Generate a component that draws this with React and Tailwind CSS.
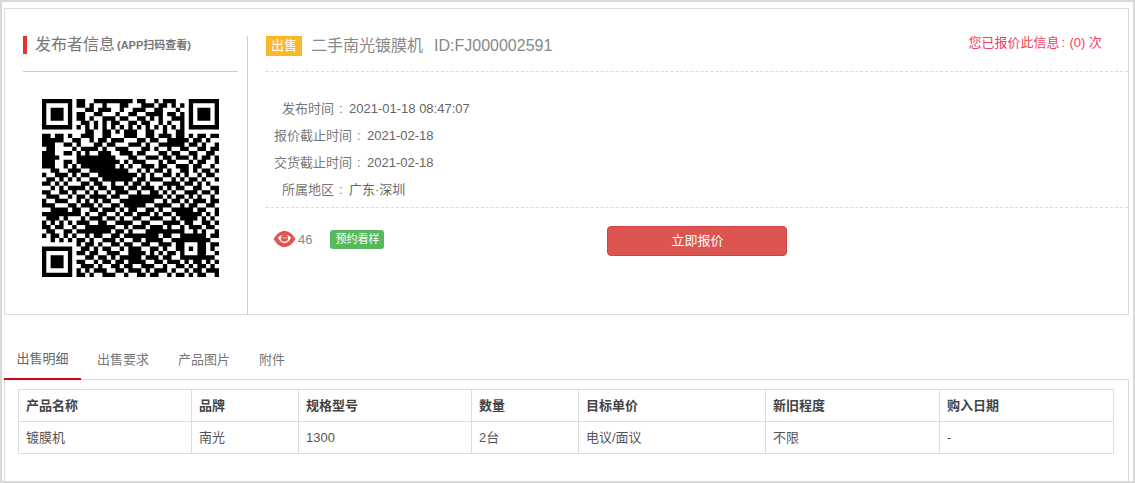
const RAW = [
  "11111110110011111111101100101110001111111",
  "10000010110100100011000111011010101000001",
  "10111010001101110010011100110001001011101",
  "10111010110011000100110011110110101011101",
  "10111010110100111011001101010011101011101",
  "10000010011010101100110110010100101000001",
  "11111110101010101010101010101010101111111",
  "00000000001100110101110011001001100000000",
  "11011010011100110001110011011101101011011",
  "11111001100101101110001101100111110110100",
  "11100110100011011000111010011111101101001",
  "01100001011110100111000110100100110011011",
  "11100110101001110011101100011011001100110",
  "11110000111111111000110011101101110101101",
  "11100110111111111101011100010110001011001",
  "11100101011111111010100111011001110110010",
  "00110011100111111111001010110100110101101",
  "10011101011001111111110101001101010010110",
  "01101000100110111111101101110010101101001",
  "11010110011011001001011010001111011010100",
  "00101001110101101110110111010101100110011",
  "11001111001010010111001001101010011101101",
  "01110010110111101100111111110101101010010",
  "10011100101010110011111111001011010111011",
  "11100011011101001101111100111100101100110",
  "00111111100110111010110011010011111011001",
  "11111101101001100101101110101101111110101",
  "01110110010111011010011001110010111101010",
  "10101000111001100111100110001111011001101",
  "11011011001111111001011101110100101110110",
  "01100100111111110110100011111111100101001",
  "10110111001011001101111111101100111111011",
  "00101000110100111010011011110011100011100",
  "00000000101101001101100110011101101011011",
  "11111110011010110010111001101001100011010",
  "10000010110110011100111101010110111111001",
  "10111010001101101011111011101100011001110",
  "10111010110010110110111100110111010110101",
  "10111010011101001101100111001001101011010",
  "10000010101011100110111010111010010110111",
  "11111110110100111001001101100101101011001",
];

function buildPath() {
  const grid = RAW.map((r) => r.split("").map((c) => c === "1"));
  for (let i = 8; i <= 32; i++) {
    grid[i][6] = i % 2 === 0;
    grid[6][i] = i % 2 === 0;
  }
  for (let y = -2; y <= 2; y++) {
    for (let x = -2; x <= 2; x++) {
      grid[34 + y][34 + x] = Math.max(Math.abs(x), Math.abs(y)) !== 1;
    }
  }
  let d = "";
  grid.forEach((row, y) =>
    row.forEach((on, x) => {
      if (on) d += `M${x} ${y}h1v1h-1z`;
    })
  );
  return d;
}

function Eye() {
  return (
    <svg width="23" height="18" viewBox="0 0 23 18">
      <path d="M0.5 9C4 3 8 1 11.5 1S19 3 22.5 9C19 15 15 17 11.5 17S4 15 0.5 9Z" fill="#e4534f" />
      <path d="M5 7.5C7 5.5 9 4.8 11.5 4.8S16 5.5 18 7.5C16.5 11.5 14 13.2 11.5 13.2S6.5 11.5 5 7.5Z" fill="#fff" />
      <circle cx="11.5" cy="8.2" r="3.6" fill="#e4534f" />
      <path d="M8.6 7.4h5.8v1h-5.8z" fill="#f6b9b6" />
    </svg>
  );
}

const INFO = [
  ["发布时间", "2021-01-18 08:47:07", true],
  ["报价截止时间", "2021-02-18", false],
  ["交货截止时间", "2021-02-18", false],
  ["所属地区", "广东·深圳", true],
];

const COLS = [
  ["产品名称", "镀膜机", "w-[173px]"],
  ["品牌", "南光", "w-[107px]"],
  ["规格型号", "1300", "w-[173px]"],
  ["数量", "2台", "w-[107px]"],
  ["目标单价", "电议/面议", "w-[187px]"],
  ["新旧程度", "不限", "w-[174px]"],
  ["购入日期", "-", ""],
];

const TABS = ["出售明细", "出售要求", "产品图片", "附件"];

export default function App() {
  return (
    <div
      className="w-[1135px] h-[483px] border-2 border-[#d9d9d9] bg-white pt-[6px] pl-[2px] pr-[4px] flex flex-col overflow-hidden text-[13px] text-[#666]"
      style={{ fontFamily: '"Liberation Sans","Noto Sans CJK SC",sans-serif' }}
    >
      <div className="h-[307px] border border-[#dcdcdc] flex">
        <div className="w-[243px] mt-[27px] border-r border-[#cfcfcf] pl-[18px] pr-[9px]">
          <div className="h-[36px] border-b border-[#cccccc]">
            <div className="h-[18px] border-l-4 border-[#ee2f2f] pl-[8px] flex items-end leading-[18px] text-[#777]">
              <span className="text-[16px]">发布者信息</span>
              <span className="ml-[2px] text-[11px] font-bold">(APP扫码查看)</span>
            </div>
          </div>
          <svg className="block mt-[27px] ml-[19px]" width="177" height="178" viewBox="0 0 41 41" preserveAspectRatio="none">
            <path d={buildPath()} fill="#000" />
          </svg>
        </div>
        <div className="flex-1 pl-[18px] flex flex-col">
          <div className="h-[63px] border-b border-dashed border-[#dddddd] pt-[27px] pr-[26px] flex items-start">
            <span className="w-[36px] h-[20px] bg-[#fbb927] text-white text-[13px] leading-[20px] text-center">出售</span>
            <span className="ml-[9px] text-[16px] leading-[20px] text-[#888]">二手南光镀膜机</span>
            <span className="ml-[11px] text-[16px] leading-[20px] text-[#888]">ID:FJ000002591</span>
            <span className="ml-auto text-[13px] leading-[14px] text-[#f2405a] flex">
              <span>您已报价此信息</span>
              <span className="w-[10px] pl-[2px]">:</span>
              <span>(0) 次</span>
            </span>
          </div>
          <div className="pt-[23px] pb-[4px] border-b border-dashed border-[#dddddd]">
            {INFO.map(([label, value, short]) => (
              <div key={label} className={short ? "h-[27px] leading-[27px] pl-[16px] flex" : "h-[27px] leading-[27px] pl-[8px] flex"}>
                <span className="text-[#777]">{label}</span>
                <span className="w-[15px] pl-[5px] text-[#777]">:</span>
                <span className="text-[#666]">{value}</span>
              </div>
            ))}
          </div>
          <div className="flex items-start pt-[18px] pl-[7px]">
            <div className="mt-[3px] flex items-center">
              <Eye />
              <span className="ml-[2px] text-[#888] relative top-[1px]">46</span>
            </div>
            <span className="ml-[18px] mt-[4px] w-[54px] h-[19px] bg-[#57b85c] rounded-[3px] text-white text-[11px] leading-[19px] text-center">预约看样</span>
            <button className="ml-[223px] w-[180px] h-[30px] bg-[#dc5550] border border-[#d04343] rounded-[4px] text-white text-[13px]">立即报价</button>
          </div>
        </div>
      </div>
      <div className="mt-[25px] h-[40px] flex border-b border-[#dcdcdc] relative">
        {TABS.map((t, i) => (
          <div
            key={t}
            className={
              i === 0
                ? "h-[40px] w-[77px] text-center leading-[38px] border-b-2 border-[#d9001b] text-[#666]"
                : "h-[40px] pl-[16px] pr-[13px] leading-[40px] text-[#777]"
            }
          >
            {t}
          </div>
        ))}
      </div>
      <div className="flex-1 border-l border-r border-[#dcdcdc] pt-[9px] pl-[13px] pr-[14px]">
        <table className="w-[1096px] table-fixed border-collapse border border-[#dddddd]">
          <thead>
            <tr>
              {COLS.map(([h, , w]) => (
                <th key={h} className={`${w} h-[32px] border border-[#dddddd] px-[7px] text-left font-bold text-[#444]`}>{h}</th>
              ))}
            </tr>
          </thead>
          <tbody>
            <tr>
              {COLS.map(([h, v]) => (
                <td key={h} className="h-[32px] border border-[#dddddd] px-[7px] text-[#555]">{v}</td>
              ))}
            </tr>
          </tbody>
        </table>
      </div>
    </div>
  );
}
